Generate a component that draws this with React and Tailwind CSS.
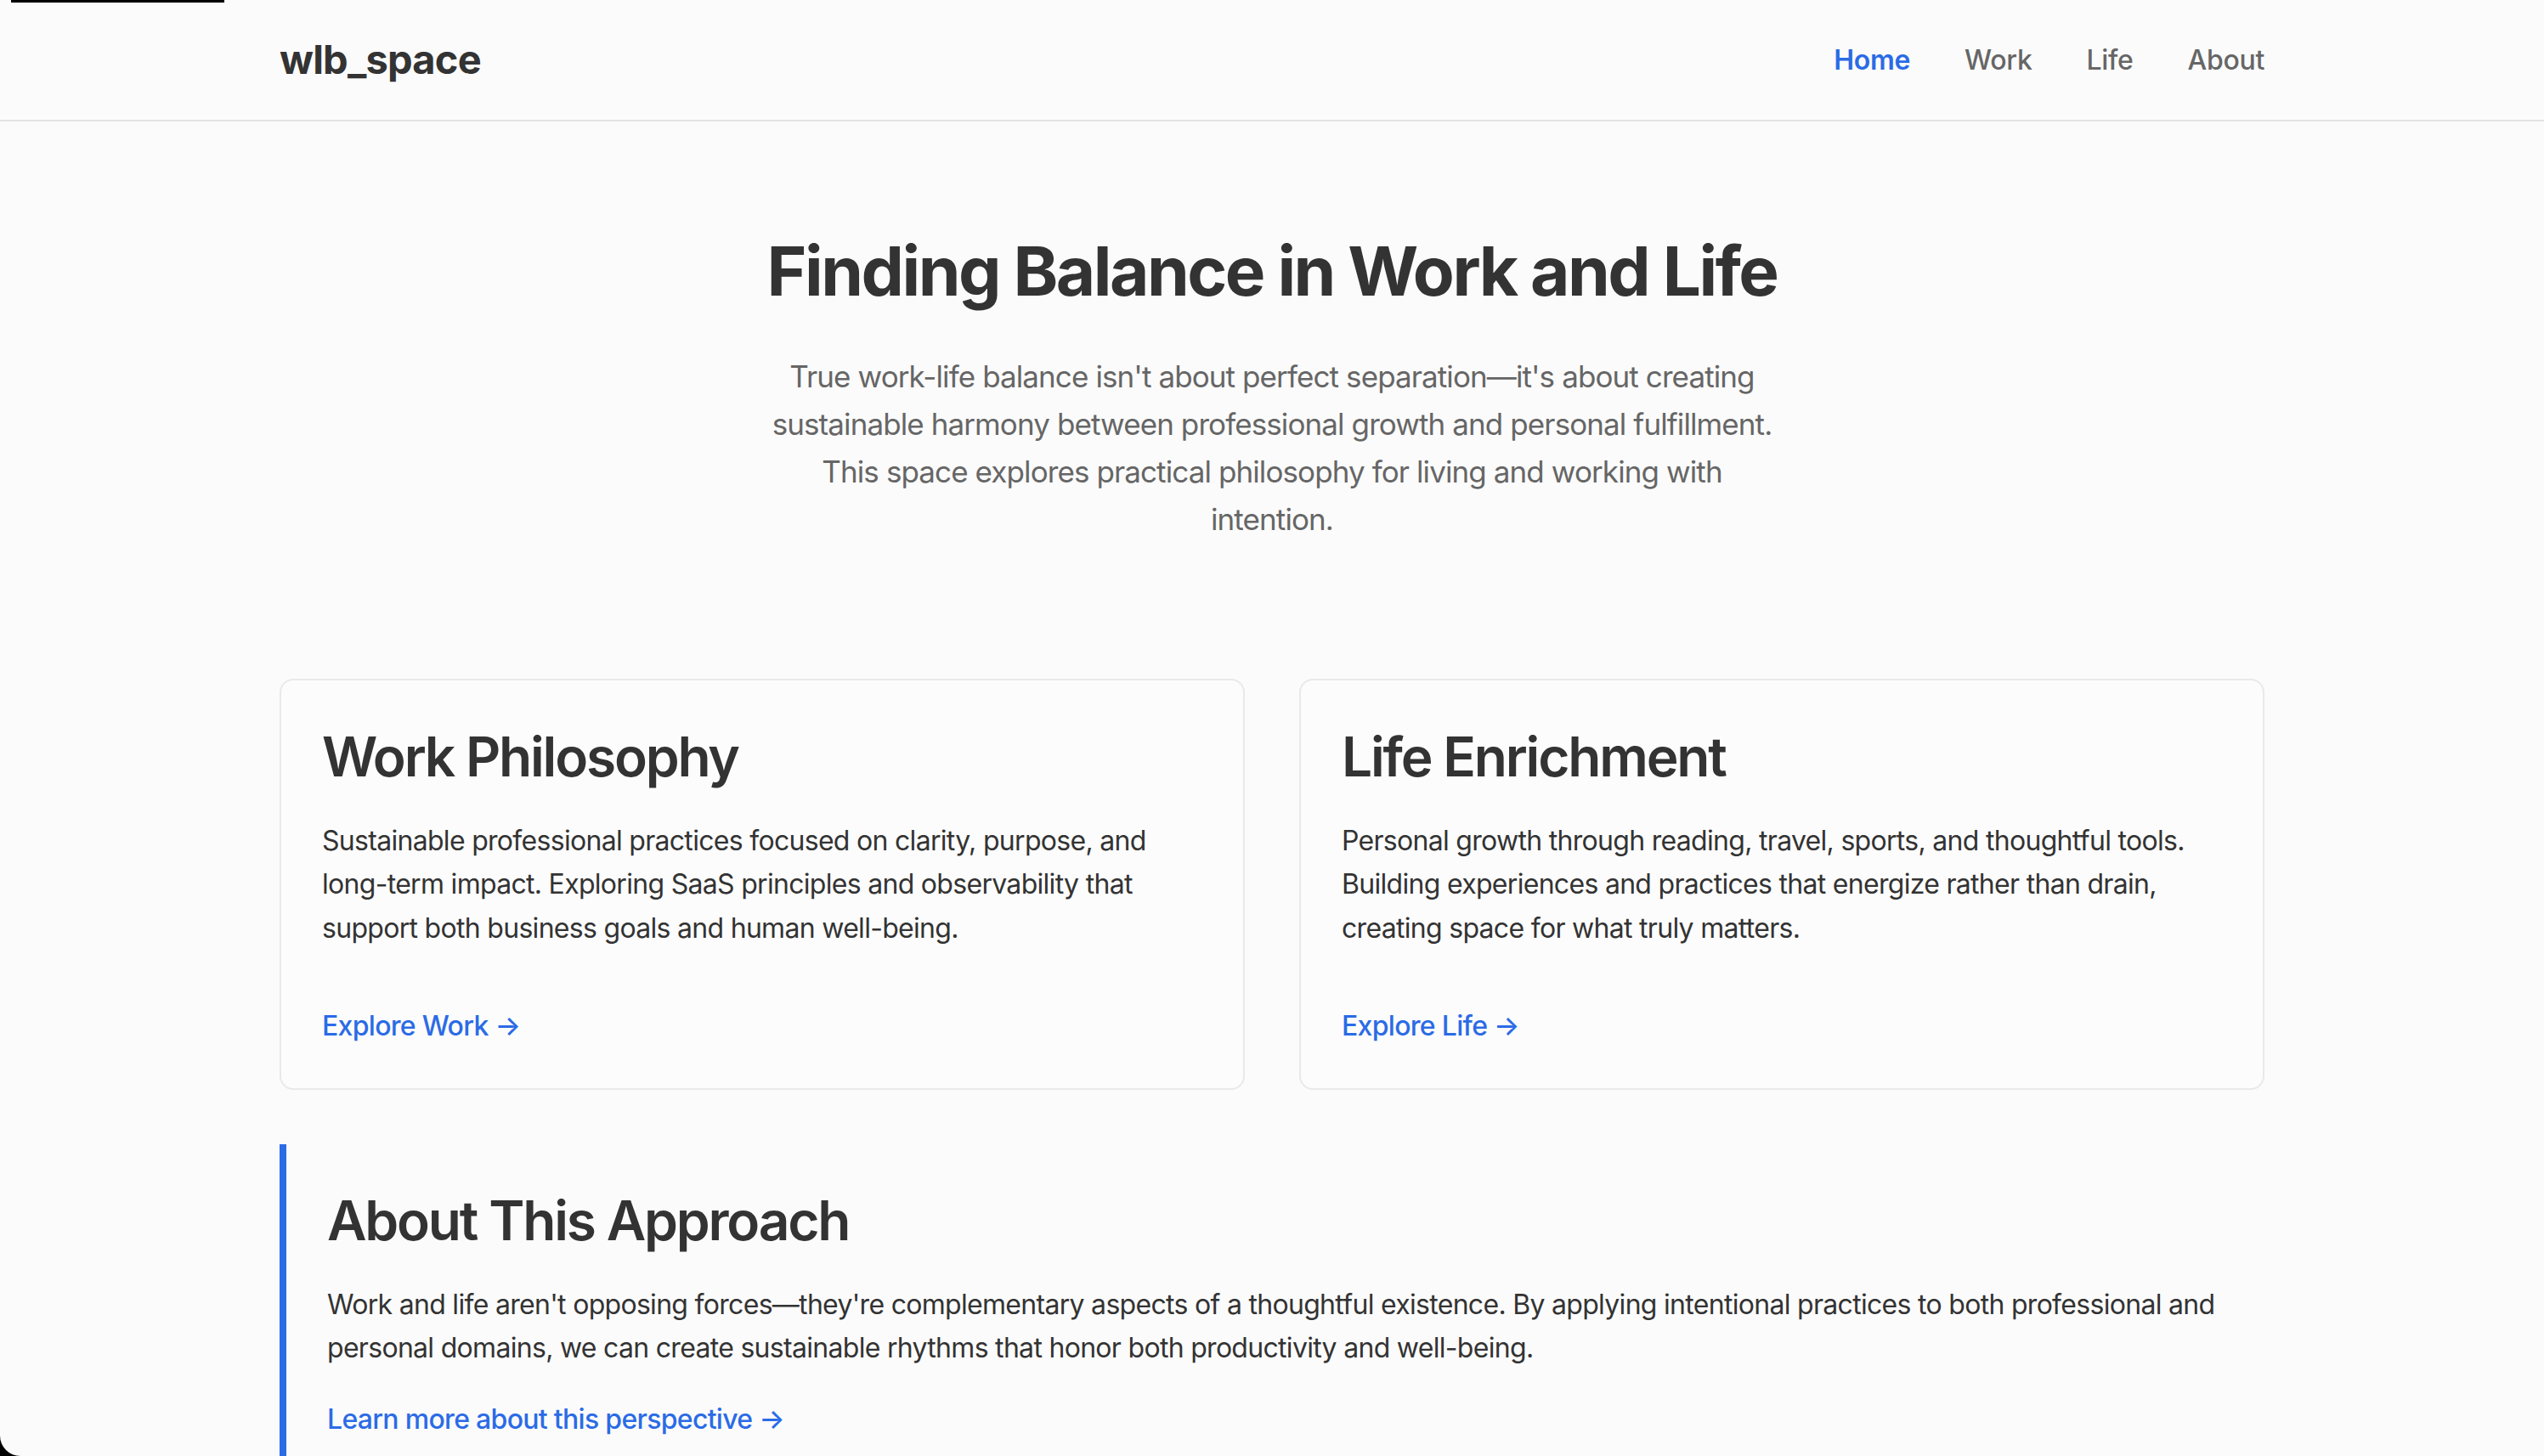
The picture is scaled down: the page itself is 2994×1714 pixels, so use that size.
import React from 'react';

const navItems = [
    { label: 'Home', active: true },
    { label: 'Work' },
    { label: 'Life' },
    { label: 'About' },
];

const cards = [
    {
        title: 'Work Philosophy',
        body: 'Sustainable professional practices focused on clarity, purpose, and long-term impact. Exploring SaaS principles and observability that support both business goals and human well-being.',
        link: 'Explore Work',
    },
    {
        title: 'Life Enrichment',
        body: 'Personal growth through reading, travel, sports, and thoughtful tools. Building experiences and practices that energize rather than drain, creating space for what truly matters.',
        link: 'Explore Life',
    },
];

const Card = ({ title, body, link }) => (
    <div className="rounded-[16px] border-2 border-[#e9e9ec] bg-[#fcfcfc] p-[48px]">
        <h2 className="mb-[32px] text-[64px] font-semibold leading-[1.3] tracking-[-2.2px] text-[#333]">{title}</h2>
        <p className="mb-[64px] text-[32px] leading-[1.6] tracking-[-0.7px] text-[#333]">{body}</p>
        <a href="#" className="text-[32px] font-medium leading-[1.6] tracking-[-0.7px] text-[#2b6be6]">
            {link} →
        </a>
    </div>
);

export default function App() {
    return (
        <div className="relative min-h-screen bg-[#fbfbfb] font-['Inter',sans-serif] text-[#333]">
            {/* window chrome leftovers */}
            <div className="absolute left-[13px] top-0 h-[3px] w-[251px] bg-black" />
            <div className="fixed bottom-0 left-0 h-[26px] w-[26px] bg-black">
                <div className="h-full w-full rounded-bl-[24px] bg-[#fbfbfb]" />
            </div>

            <header className="border-b-2 border-[#e3e3e3]">
                <div className="mx-auto flex h-[141px] w-[2336px] items-center justify-between">
                    <div className="text-[47px] font-bold tracking-[-0.8px] text-[#333]">wlb_space</div>
                    <nav className="flex items-center gap-[64px]">
                        {navItems.map((item) => (
                            <a
                                key={item.label}
                                href="#"
                                className={
                                    item.active
                                        ? 'text-[32px] font-semibold tracking-[-0.3px] text-[#2b6be6]'
                                        : 'text-[32px] font-medium tracking-[-0.3px] text-[#666]'
                                }
                            >
                                {item.label}
                            </a>
                        ))}
                    </nav>
                </div>
            </header>

            <main className="mx-auto w-[2336px]">
                <section className="pt-[128px] pb-[160px] text-center">
                    <h1 className="mb-[48px] text-[80px] font-bold leading-[1.2] tracking-[-2.5px] text-[#333]">
                        Finding Balance in Work and Life
                    </h1>
                    <p className="mx-auto max-w-[1200px] text-[35px] leading-[1.6] tracking-[-0.9px] text-[#666]">
                        True work-life balance isn't about perfect separation—it's about creating sustainable harmony
                        between professional growth and personal fulfillment. This space explores practical philosophy
                        for living and working with intention.
                    </p>
                </section>

                <section className="grid grid-cols-2 gap-[64px]">
                    {cards.map((c) => (
                        <Card key={c.title} {...c} />
                    ))}
                </section>

                <section className="mt-[64px] border-l-[8px] border-[#2b6be6] p-[48px]">
                    <h2 className="mb-[32px] text-[64px] font-semibold leading-[1.3] tracking-[-2.2px] text-[#333]">
                        About This Approach
                    </h2>
                    <p className="mb-[32px] text-[32px] leading-[1.6] tracking-[-0.7px] text-[#333]">
                        Work and life aren't opposing forces—they're complementary aspects of a thoughtful existence. By
                        applying intentional practices to both professional and personal domains, we can create
                        sustainable rhythms that honor both productivity and well-being.
                    </p>
                    <a href="#" className="text-[32px] font-medium leading-[1.6] tracking-[-0.7px] text-[#2b6be6]">
                        Learn more about this perspective →
                    </a>
                </section>
            </main>
        </div>
    );
}
